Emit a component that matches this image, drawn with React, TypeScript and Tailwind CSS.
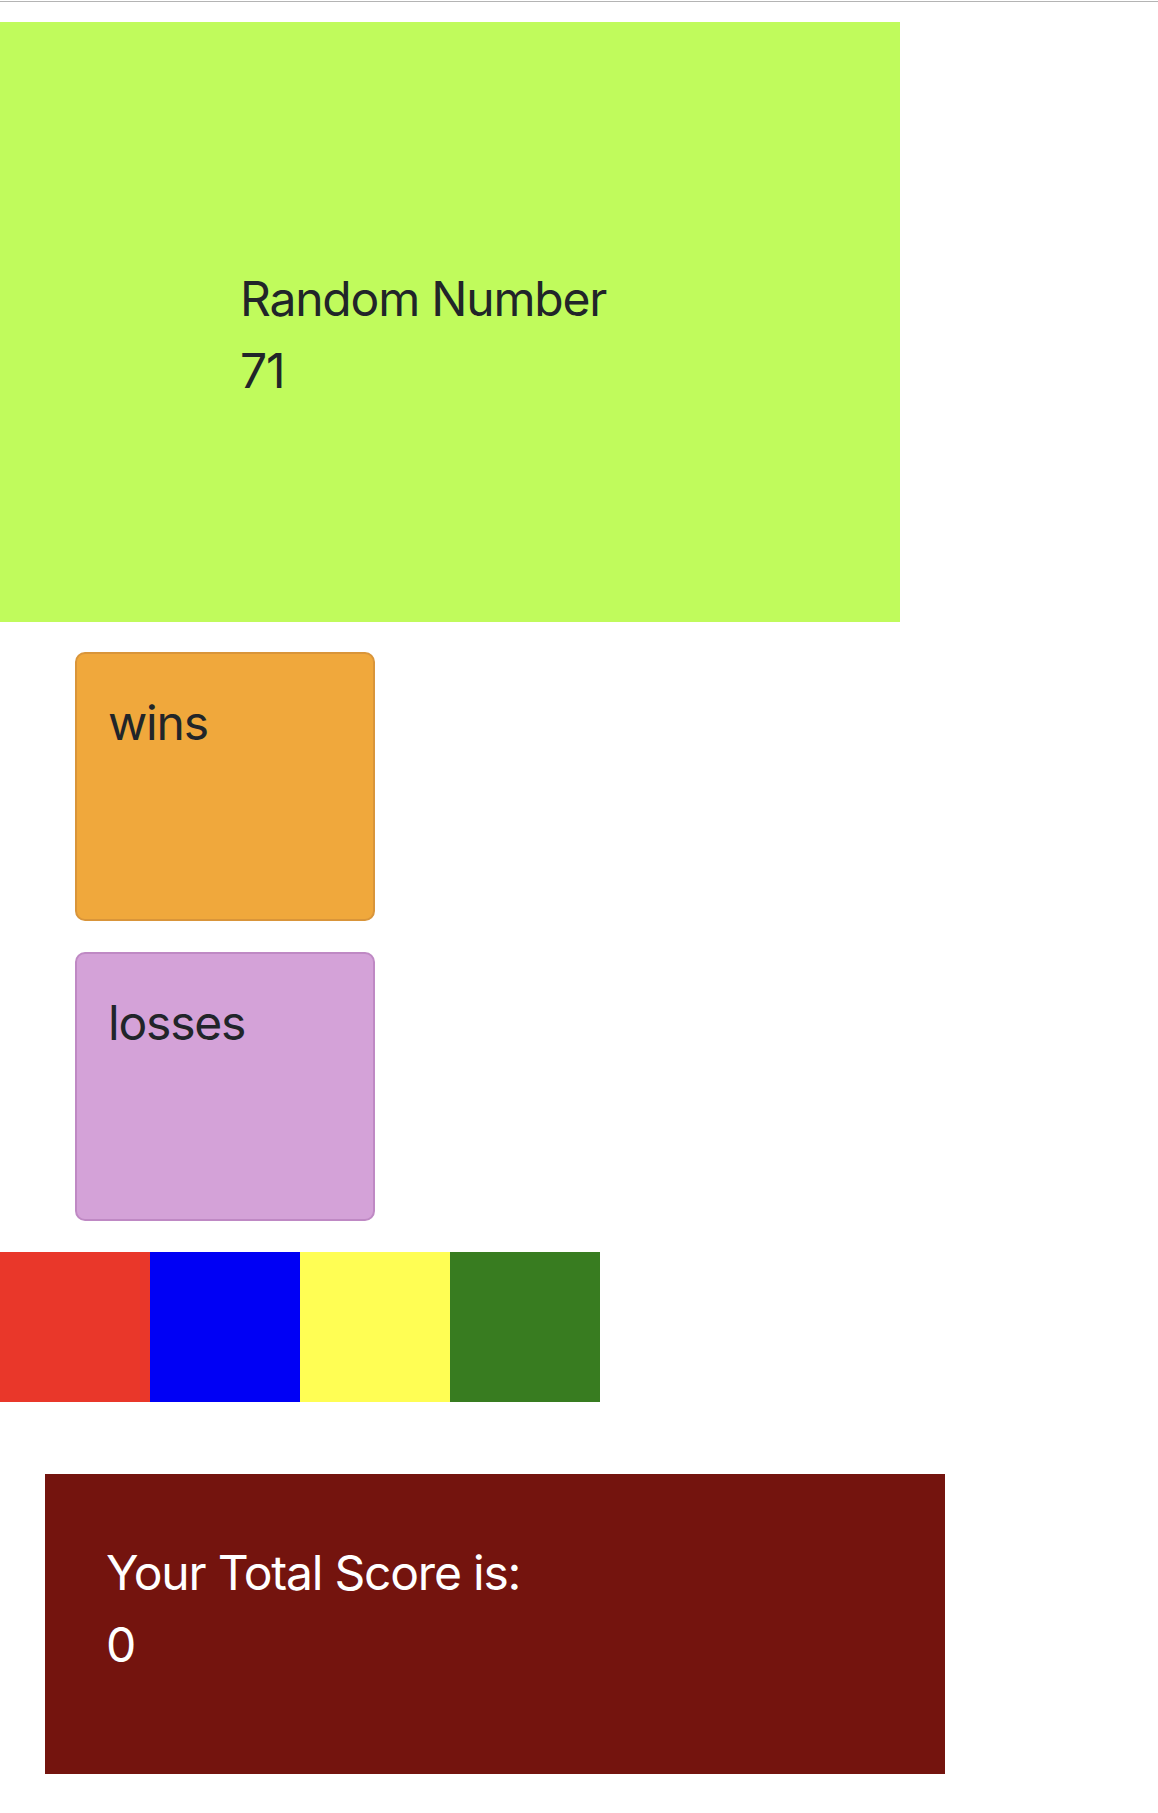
const font = { fontFamily: "Inter, 'Noto Sans', sans-serif" };

type StatBoxProps = {
  label: string;
  className: string;
};

function StatBox({ label, className }: StatBoxProps) {
  return (
    <div
      className={`ml-[75px] h-[269px] w-[300px] rounded-[10px] border-2 px-[31px] pt-[33px] text-[48px] leading-[72px] tracking-[-1.2px] text-[#212529] ${className}`}
    >
      {label}
    </div>
  );
}

const crystals = ["bg-[#e9372a]", "bg-[#0000f5]", "bg-[#fffe54]", "bg-[#387c20]"];

export default function App() {
  return (
    <div className="min-h-[1813px] w-full bg-white pt-px" style={font}>
      <div className="h-px w-full bg-[#b4b4b4]" />

      <div className="mt-[20px] h-[600px] w-[900px] bg-[#c0fb5c] pl-[240px] pt-[241px] text-[48px] leading-[72px] tracking-[-1.2px] text-[#212529]">
        <div>Random Number</div>
        <div>71</div>
      </div>

      <div className="mt-[30px] flex flex-col gap-[31px]">
        <StatBox label="wins" className="border-[#d9953a] bg-[#f0a83c]" />
        <StatBox label="losses" className="border-[#bf89c4] bg-[#d4a2d8]" />
      </div>

      <div className="mt-[31px] flex">
        {crystals.map((c) => (
          <div key={c} className={`h-[150px] w-[150px] ${c}`} />
        ))}
      </div>

      <div className="ml-[45px] mt-[72px] h-[300px] w-[900px] bg-[#74140e] pl-[61px] pt-[63px] text-[48px] leading-[72px] tracking-[-1.2px] text-white">
        <div>Your Total Score is:</div>
        <div>0</div>
      </div>
    </div>
  );
}
